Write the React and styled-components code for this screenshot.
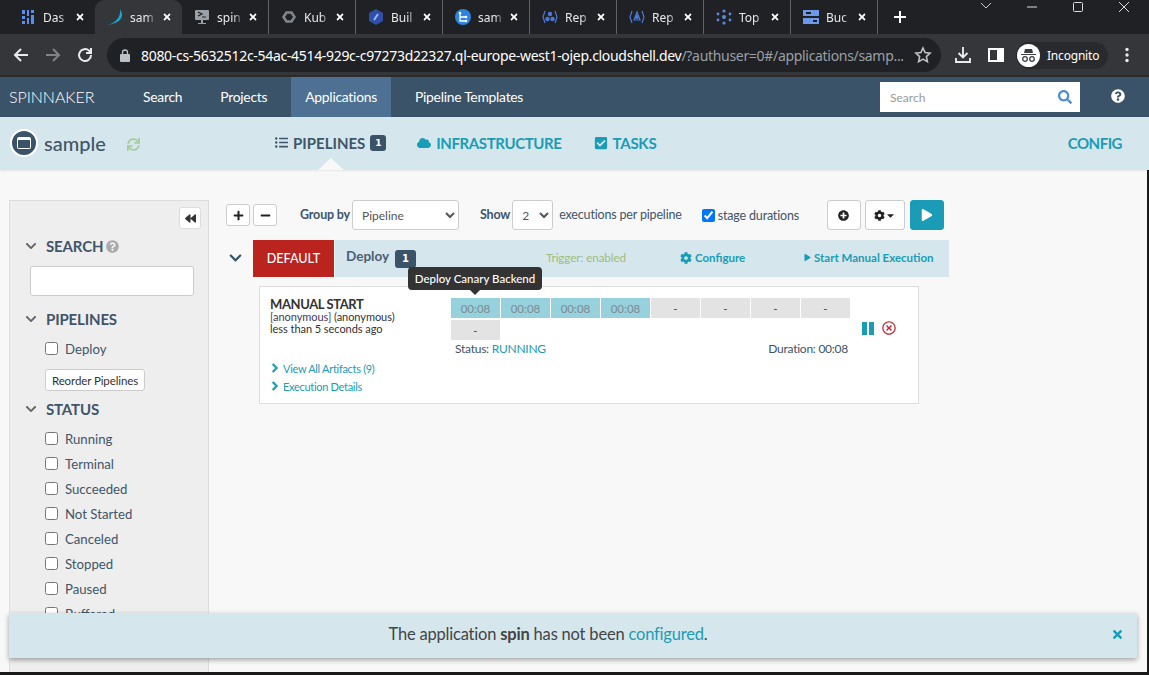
import React from "react";
import styled, { createGlobalStyle } from "styled-components";
import {
  FaChevronDown, FaChevronRight, FaCog, FaCloud, FaCheckSquare, FaPlus, FaMinus, FaBackward,
  FaQuestionCircle, FaPlusCircle, FaPlay, FaSearch, FaTimes, FaSync, FaRegTimesCircle, FaCaretDown, FaListUl,
} from "react-icons/fa";

const sans = `Lato, "Noto Sans", sans-serif`;
const ui = `"Noto Sans", "Open Sans", sans-serif`;
const teal = "#1a9cb6";
const navy = "#3a5369";
const ice = "#d5e7ec";

const Global = createGlobalStyle`
  html, body { margin: 0; padding: 0; background: #1a1a1a; }
  * { box-sizing: border-box; }
`;
const Screen = styled.div`
  position: relative; width: 1149px; height: 675px; overflow: hidden;
  display: flex; flex-direction: column; background: #1a1a1a; font-family: ${sans}; color: #333;
`;
const TabStrip = styled.div`
  height: 34px; background: #202124; display: flex; padding-left: 8px; color: #e8eaed; font-family: ${ui}; flex: none;
`;
const Tab = styled.div`
  width: 87px; height: 34px; display: flex; align-items: center; padding: 0 10px 0 12px; flex: none; position: relative;
  background: ${p => (p.$active ? "#35363a" : "transparent")};
  border-radius: ${p => (p.$active ? "9px 9px 0 0" : "0")};
  border-right: ${p => (p.$sep ? "1px solid #5f6368" : "0")};
  background-clip: padding-box;
`;
const TabIcon = styled.svg`width: 16px; height: 16px; flex: none;`;
const TabLabel = styled.span`
  font-size: 12px; margin-left: 7px; width: 27px; overflow: hidden; white-space: nowrap;
  -webkit-mask-image: linear-gradient(90deg, #000 60%, transparent 100%);
  mask-image: linear-gradient(90deg, #000 60%, transparent 100%);
`;
const TabClose = styled(FaTimes)`font-size: 10px; margin-left: auto; color: #fff; flex: none;`;
const NewTab = styled.svg`width: 14px; height: 14px; margin: 10px 0 0 15px; flex: none;`;
const WinControls = styled.div`
  margin-left: auto; display: flex; align-items: flex-start; gap: 32px; padding: 1px 18px 0 0; flex: none;
`;
const WinIcon = styled.svg`width: 14px; height: 12px; flex: none;`;

const Toolbar = styled.div`
  height: 41px; background: #35363a; display: flex; align-items: flex-start; padding: 4px 0 0 0; flex: none; color: #fff;
`;
const ToolIcon = styled.svg`
  width: 18px; height: 18px; flex: none; margin-top: 8px; margin-left: ${p => p.$ml}px;
`;
const Omni = styled.div`
  width: 834px; height: 34px; margin-left: 13px; border-radius: 17px; background: #202124;
  display: flex; align-items: center; padding-left: 13px; flex: none; font-family: ${ui};
`;
const UrlWrap = styled.div`
  font-size: 14px; margin-left: 11px; white-space: nowrap; color: #fff; letter-spacing: -0.31px; flex: none;
`;
const UrlDim = styled.span`color: #9aa0a6;`;
const Star = styled.svg`width: 18px; height: 18px; margin-left: 10px; flex: none;`;
const Profile = styled.div`
  width: 92px; height: 27px; margin: 4px 0 0 11px; border-radius: 14px; background: #292a2d; display: flex; align-items: center;
  font-family: ${ui}; font-size: 12px; flex: none; padding-left: 1px;
`;
const ProfileFace = styled.svg`width: 23px; height: 23px; flex: none;`;
const ProfileName = styled.span`margin-left: 7px; letter-spacing: -0.2px;`;
const Seam = styled.div`height: 2px; background: #2c2c2e; flex: none;`;

const Nav = styled.nav`
  height: 40px; background: ${navy}; display: flex; align-items: stretch; color: #fff; flex: none; padding-left: 9px; position: relative;
`;
const Brand = styled.div`font-size: 16px; font-weight: 300; width: 120px; line-height: 40px; letter-spacing: -0.05px;`;
const NavItems = styled.div`display: flex; gap: 10px;`;
const NavItem = styled.div`
  padding: 0 14px; line-height: 40px; font-size: 13.85px; font-weight: 400; letter-spacing: -0.25px; flex: none;
  background: ${p => (p.$active ? "#4d7093" : "transparent")};
`;
const NavSearch = styled.div`
  margin: 5px 1px 0 auto; width: 200px; height: 30px; background: #fff; display: flex; align-items: center; padding: 0 8px 0 10px;
  font-size: 12px; color: #999;
`;
const NavSearchIcon = styled(FaSearch)`margin-left: auto; color: #4a90d0; font-size: 14px;`;
const NavHelp = styled(FaQuestionCircle)`color: #fff; font-size: 14px; margin: 12px 24px 0 30px; flex: none;`;

const SubHeader = styled.div`
  height: 53px; background: ${ice}; display: flex; align-items: center; padding: 0 0 2px 10px; flex: none; position: relative;
  box-shadow: 0 1px 2px rgba(0,0,0,.08); z-index: 1;
`;
const AppIcon = styled.div`
  width: 28px; height: 28px; border-radius: 50%; background: ${navy}; border: 2px solid #fff;
  display: flex; align-items: center; justify-content: center; flex: none;
`;
const AppGlyph = styled.div`width: 14px; height: 12px; border-radius: 2px; background: #fff; padding: 3px 1px 1px;`;
const AppGlyphInner = styled.div`width: 100%; height: 100%; background: ${navy};`;
const AppName = styled.div`font-size: 20px; color: #3f5569; margin-left: 6px; width: 83px; font-weight: 500;`;
const Refresh = styled(FaSync)`color: #a9cba0; font-size: 13px; flex: none; margin-top: 3px;`;
const Section = styled.div`
  display: flex; align-items: center; font-size: 15px; font-weight: 700; flex: none;
  letter-spacing: ${p => p.$ls ?? -0.1}px;
  margin-left: ${p => p.$ml}px; color: ${p => (p.$on ? "#3f5569" : teal)};
`;
const SectionIcon = styled.span`display: flex; margin-right: 5px; font-size: ${p => p.$size || 14}px;`;
const Badge = styled.span`
  display: inline-flex; align-items: center; justify-content: center; background: ${navy}; color: #fff;
  font-family: "DejaVu Sans", sans-serif; font-weight: 700; font-size: ${p => p.$fs || 9}px; border-radius: 3px; letter-spacing: 0;
  width: ${p => p.$w}px; height: ${p => p.$h}px; margin-left: ${p => p.$ml}px; flex: none;
`;
const Notch = styled.div`
  position: absolute; left: 318px; bottom: 0; width: 0; height: 0; border-left: 13px solid transparent;
  border-right: 13px solid transparent; border-bottom: 12px solid #f8f8f8;
`;
const ConfigLink = styled(Section)`margin-left: auto; margin-right: 27px;`;

const Body = styled.div`
  height: 502px; background: #f8f8f8; display: flex; padding: 30px 0 0 9px; flex: none; margin-right: 2px;
`;
const Sidebar = styled.aside`
  width: 200px; background: #eee; border: 1px solid #ddd; border-bottom: 0; flex: none; overflow: hidden; padding: 6px 7px 0 15px; position: relative;
`;
const CollapseRow = styled.div`display: flex; justify-content: flex-end;`;
const Collapse = styled.button`
  width: 22px; height: 22px; border: 1px solid #ddd; border-radius: 3px; background: #fff; display: flex;
  align-items: center; justify-content: center; padding: 0; color: #333; font-size: 11px;
`;
const Heading = styled.div`
  display: flex; align-items: center; font-size: 15px; font-weight: 700; color: #3f5569; letter-spacing: -0.15px;
  height: 20px; margin-top: ${p => p.$mt}px;
`;
const HeadChevron = styled(FaChevronDown)`color: #666; font-size: 12px; width: 12px; margin-right: 9px; flex: none;`;
const HeadHelp = styled(FaQuestionCircle)`color: #aaa; font-size: 13px; margin-left: 3px;`;
const FilterInput = styled.input`
  display: block; width: 164px; height: 30px; margin: 10px 0 0 5px; border: 1px solid #ccc; border-radius: 3px; background: #fff;
`;
const CheckRow = styled.label`
  display: flex; align-items: center; height: 25px; padding-left: 20px; font-size: 13.2px; color: #3f5569;
  margin-top: ${p => p.$mt || 0}px;
`;
const Check = styled.input.attrs({ type: "checkbox" })`
  width: 13px; height: 13px; margin: 0 7px 0 0; flex: none;
`;
const Reorder = styled.button`
  display: block; margin: 8px 0 0 20px; width: 100px; height: 22px; padding: 0; background: #fff; border: 1px solid #ccc; border-radius: 3px;
  font-family: ${sans}; font-size: 11.5px; color: #333; letter-spacing: -0.1px;
`;

const Content = styled.main`flex: 1; padding-left: 17px; min-width: 0; position: relative;`;
const Controls = styled.div`display: flex; align-items: center; height: 30px;`;
const IconBtn = styled.button`
  width: ${p => p.$w || 24}px; height: ${p => p.$h || 22}px; padding: 0; border: 1px solid #ccc; border-radius: 3px; background: #fff; color: #222;
  display: flex; align-items: center; justify-content: center; flex: none; font-size: 11px; margin-left: ${p => p.$ml || 0}px;
`;
const PlayBtn = styled(IconBtn)`background: ${teal}; border-color: ${teal}; color: #fff; font-size: 12px; border-radius: 3px;`;
const CtlLabel = styled.span`
  font-size: 12.5px; font-weight: ${p => (p.$b ? 700 : 400)}; color: #3f5569; margin-left: ${p => p.$ml}px; flex: none; letter-spacing: -0.17px;
  margin-top: ${p => (p.$low ? 0 : -2)}px;
`;
const Select = styled.select`
  height: 30px; width: ${p => p.$w}px; margin-left: ${p => p.$ml}px; padding: 0 0 0 5px; background: #fff; border: 1px solid #ccc; border-radius: 3px;
  font-family: ${sans}; font-size: 12px; color: #555; flex: none;
`;
const DurationCheck = styled(Check)`margin: 0 3px 0 20px;`;

const GroupRow = styled.div`display: flex; align-items: stretch; height: 37px; margin-top: 10px; position: relative;`;
const GroupChevron = styled(FaChevronDown)`color: ${navy}; font-size: 14px; width: 15px; margin: 11px 10px 0 2px; flex: none;`;
const GroupBar = styled.div`width: 696px; background: ${ice}; display: flex; align-items: center; flex: none;`;
const DefaultTag = styled.div`
  width: 82px; height: 37px; background: #bb231e; color: #fff; border-right: 1px solid #fff; font-size: 12.6px; font-weight: 500;
  display: flex; align-items: center; justify-content: center; flex: none;
`;
const GroupName = styled.span`font-size: 13.5px; font-weight: 700; color: #4a6074; margin: -5px 0 0 11px; width: 49px; flex: none;`;
const Trigger = styled.span`font-size: 11.7px; color: #9fbb80; margin: -3px 0 0 130px; width: 134px; flex: none; letter-spacing: -0.1px;`;
const GroupLink = styled.span`
  display: flex; align-items: center; font-size: 11.5px; font-weight: 700; color: ${teal}; flex: none; letter-spacing: 0;
  width: ${p => p.$w}px; margin-top: -2px;
`;
const GroupLinkIcon = styled.span`display: flex; font-size: ${p => p.$s}px; margin-right: ${p => p.$mr}px;`;
const Tooltip = styled.div`
  position: absolute; left: 182px; top: 27px; width: 134px; height: 23px; border-radius: 4px; background: #333; color: #fff;
  font-size: 11.5px; font-weight: 500; display: flex; align-items: center; justify-content: center; z-index: 3;
  &::after {
    content: ""; position: absolute; left: 62px; bottom: -5px; border-left: 5px solid transparent;
    border-right: 5px solid transparent; border-top: 5px solid #333;
  }
`;

const Card = styled.section`
  width: 660px; height: 118px; margin: 9px 0 0 33px; background: #fff; border: 1px solid #ddd; display: flex; padding: 11px 0 0 10px;
`;
const Info = styled.div`width: 181px; flex: none; display: flex; flex-direction: column;`;
const Title = styled.div`font-size: 13px; font-weight: 700; color: #333; line-height: 13px; letter-spacing: -0.4px;`;
const Meta = styled.div`font-size: 11px; line-height: 12px; color: #333; letter-spacing: -0.05px; &:first-of-type { margin-top: 3px; }`;
const Who = styled.span`color: #443a5c;`;
const CardLink = styled.div`
  display: flex; align-items: center; font-size: 11px; color: ${teal}; height: 18px; letter-spacing: -0.3px;
  margin-top: ${p => p.$mt || 0}px;
`;
const CardChevron = styled(FaChevronRight)`font-size: 10px; width: 8px; margin: 0 4px 0 1px; flex: none; stroke: currentColor; stroke-width: 40px;`;
const Run = styled.div`width: 399px; flex: none;`;
const Stages = styled.div`display: grid; grid-template-columns: repeat(8, 49px); gap: 2px 1px; width: 399px;`;
const Stage = styled.div`
  height: 20px; background: ${p => (p.$run ? "#97d1dd" : "#e3e3e3")}; color: ${p => (p.$run ? "#7f8f94" : "#555")};
  display: flex; align-items: center; justify-content: center; font-size: 11.5px; font-weight: 500;
`;
const StatusRow = styled.div`
  display: flex; justify-content: space-between; padding: 2px 2px 0 4px; font-size: 12px; color: #3f5569; line-height: 14px; letter-spacing: -0.25px;
`;
const Running = styled.span`color: ${teal};`;
const Actions = styled.div`display: flex; align-items: center; gap: 8px; height: 14px; margin: 23px 0 0 12px; flex: none;`;
const Pause = styled.div`display: flex; gap: 2px;`;
const PauseBar = styled.div`width: 5px; height: 13px; background: ${teal};`;
const Cancel = styled(FaRegTimesCircle)`color: #c0303a; font-size: 14px;`;

const Toast = styled.div`
  position: absolute; left: 9px; top: 613px; width: 1128px; height: 45px; background: ${ice}; box-shadow: 0 2px 5px rgba(0,0,0,.35);
  display: flex; align-items: center; justify-content: center; font-size: 16.5px; color: #444; z-index: 5; padding: 0 50px 3px 0; letter-spacing: -0.2px;
`;
const ToastLink = styled.span`color: ${teal};`;
const ToastClose = styled(FaTimes)`position: absolute; right: 13px; top: 15px; color: ${teal}; font-size: 13px;`;

const tabs = [
  ["Das", <g fill="#5b8def"><rect x="2" y="1" width="3" height="4"/><rect x="2" y="7" width="3" height="3"/><rect x="2" y="12" width="3" height="3"/><rect x="7" y="1" width="2" height="6"/><rect x="7" y="9" width="2" height="6"/><rect x="11" y="1" width="3" height="3"/><rect x="11" y="6" width="3" height="9"/></g>],
  ["sam", <path d="M13 0C14 7 10 13 1 16 7 15 15 12 15 6 15 4 14 2 13 0Z" fill="#1fa6d0"/>],
  ["spin", <g><rect x="1" y="1" width="14" height="10" rx="1" fill="#9aa0a6"/><rect x="7" y="11" width="2" height="3" fill="#9aa0a6"/><rect x="4" y="14" width="8" height="1" fill="#9aa0a6"/><path d="M4 3l4 2-4 2M8 8h4" fill="none" stroke="#202124" strokeWidth="1.2"/></g>],
  ["Kub", <g fill="none" stroke="#80868b" strokeWidth="2.6"><path d="M5.500 3.500h5L13.500 8l-3 4.500h-5L2.500 8Z"/></g>],
  ["Buil", <g><path d="M8 0l7 4v8l-7 4-7-4V4Z" fill="#2f4fa8"/><path d="M6 11l2-3 2-3" stroke="#9db7f0" strokeWidth="2" fill="none"/></g>],
  ["sam", <g><circle cx="8" cy="8" r="8" fill="#2b84e0"/><path d="M5 4v8h6M5 8h6" stroke="#fff" strokeWidth="1.3" fill="none"/><circle cx="5" cy="4" r="1.3" fill="#fff"/><circle cx="11" cy="8" r="1.3" fill="#fff"/><circle cx="11" cy="12" r="1.3" fill="#fff"/></g>],
  ["Rep", <g fill="none" stroke="#4c79d8" strokeWidth="1.2"><path d="M3 2L1 8l2 6M13 2l2 6-2 6"/><circle cx="8" cy="5" r="1.6" fill="#4c79d8"/><circle cx="5.5" cy="10" r="1.6" fill="#4c79d8"/><circle cx="10.5" cy="10" r="1.6" fill="#4c79d8"/></g>],
  ["Rep", <g fill="none" stroke="#4c79d8" strokeWidth="1.2"><path d="M3 2L1 8l2 6M13 2l2 6-2 6M8 3l-3 8h6Z"/><circle cx="8" cy="8" r="1.4" fill="#4c79d8"/></g>],
  ["Top", <g fill="#5f87e0"><circle cx="8" cy="8" r="2"/><circle cx="8" cy="2" r="1.6"/><circle cx="8" cy="14" r="1.6"/><circle cx="2" cy="5" r="1.4"/><circle cx="14" cy="5" r="1.4"/><circle cx="2" cy="11" r="1.4"/><circle cx="14" cy="11" r="1.4"/></g>],
  ["Buc", <g fill="#6d97e8"><rect x="0" y="1" width="16" height="6"/><rect x="0" y="9" width="16" height="6"/><rect x="3" y="3" width="5" height="2" fill="#202124"/><rect x="10" y="11" width="4" height="2" fill="#202124"/></g>],
];
const statuses = ["Running", "Terminal", "Succeeded", "Not Started", "Canceled", "Stopped", "Paused", "Buffered"];
const stages = ["00:08", "00:08", "00:08", "00:08", "-", "-", "-", "-", "-"];

export default function App() {
  return (
    <Screen>
      <Global />
      <TabStrip>
        {tabs.map(([label, icon], i) => (
          <Tab key={i} $active={i === 1} $sep={i >= 2}>
            <TabIcon viewBox="0 0 16 16">{icon}</TabIcon>
            <TabLabel>{label}</TabLabel>
            <TabClose />
          </Tab>
        ))}
        <NewTab viewBox="0 0 14 14"><path d="M7 1v12M1 7h12" stroke="#fff" strokeWidth="2" /></NewTab>
        <WinControls>
          <WinIcon viewBox="0 0 14 12"><path d="M2 2l5 5 5-5" fill="none" stroke="#ccc" strokeWidth="1" /></WinIcon>
          <WinIcon viewBox="0 0 14 12"><path d="M2 6h10" stroke="#ddd" strokeWidth="1" /></WinIcon>
          <WinIcon viewBox="0 0 14 12"><rect x="2.5" y="1.5" width="9" height="9" rx="1" fill="none" stroke="#ddd" /></WinIcon>
          <WinIcon viewBox="0 0 14 12"><path d="M2 1l10 10M12 1L2 11" stroke="#ddd" strokeWidth="1" /></WinIcon>
        </WinControls>
      </TabStrip>
      <Toolbar>
        <ToolIcon $ml={12} viewBox="0 0 18 18"><path d="M16 9H3M9 3L3 9l6 6" fill="none" stroke="#e8eaed" strokeWidth="2" /></ToolIcon>
        <ToolIcon $ml={14} viewBox="0 0 18 18"><path d="M2 9h13M9 3l6 6-6 6" fill="none" stroke="#7f8387" strokeWidth="2" /></ToolIcon>
        <ToolIcon $ml={14} viewBox="0 0 18 18"><path d="M15 9a6 6 0 1 1-1.8-4.2L15 6.5M15 2v5h-5" fill="none" stroke="#e8eaed" strokeWidth="2" /></ToolIcon>
        <Omni>
          <svg width="10" height="13" viewBox="0 0 10 13"><rect x="0" y="5" width="10" height="8" rx="1" fill="#bdc1c6" /><path d="M2.5 5V3.5a2.5 2.5 0 0 1 5 0V5" fill="none" stroke="#bdc1c6" strokeWidth="1.3" /></svg>
          <UrlWrap>8080-cs-5632512c-54ac-4514-929c-c97273d22327.ql-europe-west1-ojep.cloudshell.dev<UrlDim>/?authuser=0#/applications/samp...</UrlDim></UrlWrap>
          <Star viewBox="0 0 18 18"><path d="M9 2l2.1 4.6 5 .6-3.7 3.4 1 5L9 13.1l-4.4 2.5 1-5L1.900 7.200l5-.6Z" fill="none" stroke="#bdc1c6" strokeWidth="1.6" /></Star>
        </Omni>
        <ToolIcon $ml={13} viewBox="0 0 18 18"><path d="M9 1v10M4.500 7L9 11.500 13.500 7M2 12v4h14v-4" fill="none" stroke="#e8eaed" strokeWidth="1.9" /></ToolIcon>
        <ToolIcon $ml={15} viewBox="0 0 18 18"><rect x="2" y="3" width="14" height="12" fill="none" stroke="#fff" strokeWidth="2" /><rect x="10" y="3" width="6" height="12" fill="#fff" /></ToolIcon>
        <Profile>
          <ProfileFace viewBox="0 0 23 23">
            <circle cx="11.500" cy="11.500" r="11.500" fill="#fff" />
            <path d="M8 5h7l1 4H7ZM4 10h15v1H4Z" fill="#3c4043" />
            <circle cx="8" cy="15" r="2.300" fill="none" stroke="#3c4043" strokeWidth="1.300" />
            <circle cx="15" cy="15" r="2.300" fill="none" stroke="#3c4043" strokeWidth="1.300" />
          </ProfileFace>
          <ProfileName>Incognito</ProfileName>
        </Profile>
        <ToolIcon $ml={10} viewBox="0 0 18 18"><g fill="#e8eaed"><circle cx="9" cy="3.500" r="1.700" /><circle cx="9" cy="9" r="1.700" /><circle cx="9" cy="14.500" r="1.700" /></g></ToolIcon>
      </Toolbar>
      <Seam />
      <Nav>
        <Brand>SPINNAKER</Brand>
        <NavItems>
          <NavItem>Search</NavItem>
          <NavItem>Projects</NavItem>
          <NavItem $active>Applications</NavItem>
          <NavItem>Pipeline Templates</NavItem>
        </NavItems>
        <NavSearch>Search<NavSearchIcon /></NavSearch>
        <NavHelp />
      </Nav>
      <SubHeader>
        <AppIcon><AppGlyph><AppGlyphInner /></AppGlyph></AppIcon>
        <AppName>sample</AppName>
        <Refresh />
        <Section $on $ml={135} $ls={0}><SectionIcon $size={13}><FaListUl /></SectionIcon>PIPELINES<Badge $w={16} $h={16} $ml={5}>1</Badge></Section>
        <Section $ml={31} $ls={-0.4}><SectionIcon><FaCloud /></SectionIcon>INFRASTRUCTURE</Section>
        <Section $ml={32} $ls={-0.25}><SectionIcon><FaCheckSquare /></SectionIcon>TASKS</Section>
        <ConfigLink $ls={-0.5}>CONFIG</ConfigLink>
        <Notch />
      </SubHeader>
      <Body>
        <Sidebar>
          <CollapseRow><Collapse><FaBackward /></Collapse></CollapseRow>
          <Heading $mt={7}><HeadChevron />SEARCH<HeadHelp /></Heading>
          <FilterInput />
          <Heading $mt={13}><HeadChevron />PIPELINES</Heading>
          <CheckRow $mt={7}><Check />Deploy</CheckRow>
          <Reorder>Reorder Pipelines</Reorder>
          <Heading $mt={8}><HeadChevron />STATUS</Heading>
          {statuses.map((s, i) => <CheckRow key={s} $mt={i === 0 ? 7 : 0}><Check />{s}</CheckRow>)}
        </Sidebar>
        <Content>
          <Controls>
            <IconBtn><FaPlus /></IconBtn>
            <IconBtn $ml={3}><FaMinus /></IconBtn>
            <CtlLabel $b $ml={23}>Group by</CtlLabel>
            <Select $w={107} $ml={2} defaultValue="Pipeline"><option>Pipeline</option></Select>
            <CtlLabel $b $ml={21}>Show</CtlLabel>
            <Select $w={41} $ml={2} defaultValue="2"><option>2</option></Select>
            <CtlLabel $ml={6}>executions per pipeline</CtlLabel>
            <DurationCheck defaultChecked />
            <CtlLabel $low $ml={0}>stage durations</CtlLabel>
            <IconBtn $w={34} $h={30} $ml={28}><FaPlusCircle /></IconBtn>
            <IconBtn $w={40} $h={30} $ml={4}><FaCog /><FaCaretDown /></IconBtn>
            <PlayBtn $w={34} $h={30} $ml={5}><FaPlay /></PlayBtn>
          </Controls>
          <GroupRow>
            <GroupChevron />
            <GroupBar>
              <DefaultTag>DEFAULT</DefaultTag>
              <GroupName>Deploy</GroupName>
              <Badge $w={21} $h={18} $fs={10} $ml={0}>1</Badge>
              <Trigger>Trigger: enabled</Trigger>
              <GroupLink $w={124}><GroupLinkIcon $s={12} $mr={3}><FaCog /></GroupLinkIcon>Configure</GroupLink>
              <GroupLink $w={135}><GroupLinkIcon $s={7} $mr={3}><FaPlay /></GroupLinkIcon>Start Manual Execution</GroupLink>
            </GroupBar>
            <Tooltip>Deploy Canary Backend</Tooltip>
          </GroupRow>
          <Card>
            <Info>
              <Title>MANUAL START</Title>
              <Meta><Who>[anonymous]</Who> (anonymous)</Meta>
              <Meta>less than 5 seconds ago</Meta>
              <CardLink $mt={24}><CardChevron />View All Artifacts (9)</CardLink>
              <CardLink><CardChevron />Execution Details</CardLink>
            </Info>
            <Run>
              <Stages>
                {stages.map((s, i) => <Stage key={i} $run={i < 4}>{s}</Stage>)}
              </Stages>
              <StatusRow>
                <span>Status: <Running>RUNNING</Running></span>
                <span>Duration: 00:08</span>
              </StatusRow>
            </Run>
            <Actions>
              <Pause><PauseBar /><PauseBar /></Pause>
              <Cancel />
            </Actions>
          </Card>
        </Content>
      </Body>
      <Toast>
        <span>The application <b>spin</b> has not been <ToastLink>configured</ToastLink>.</span>
        <ToastClose />
      </Toast>
    </Screen>
  );
}
